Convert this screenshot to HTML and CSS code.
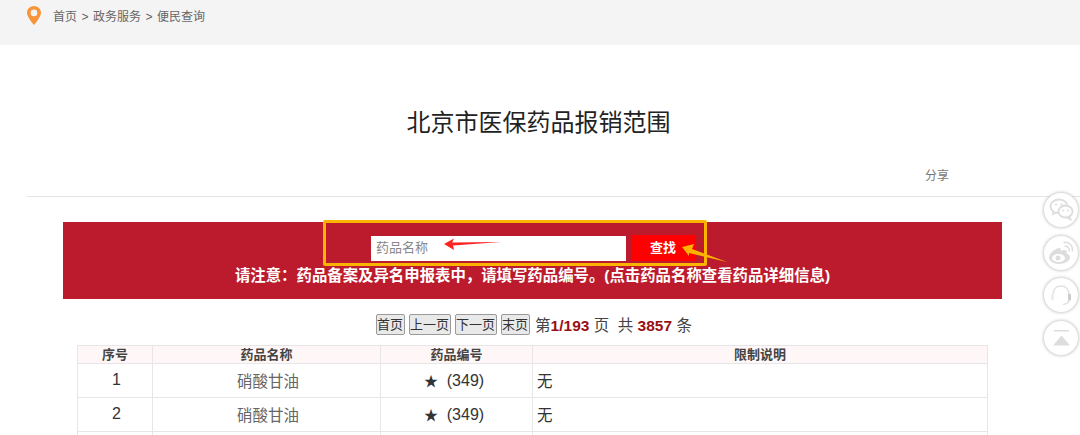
FILE: index.html
```html
<!DOCTYPE html>
<html lang="zh-CN">
<head>
<meta charset="utf-8">
<title>北京市医保药品报销范围</title>
<link rel="stylesheet" href="styles.css">
</head>
<body>
<header class="crumb">
  <svg class="pin" width="14" height="19" viewBox="0 0 14 19"><path fill="#f8953c" fill-rule="evenodd" d="M7 0C3 0 0 3 0 6.800c0 2.800 2.800 7.400 7 12.200 4.200-4.800 7-9.400 7-12.200C14 3 11 0 7 0zm0 3.600a3.300 3.300 0 1 1 0 6.600 3.300 3.300 0 0 1 0-6.600z"/></svg>
  <span>首页</span><span>&gt;</span><span>政务服务</span><span>&gt;</span><span>便民查询</span>
</header>
<main class="page">
  <h1 class="title">北京市医保药品报销范围</h1>
  <div class="share-row"><span class="share">分享</span></div>
  <section class="banner">
    <div class="search-row">
      <div class="input">药品名称</div>
      <div class="btn-search">查找</div>
    </div>
    <p class="notice">请注意：药品备案及异名申报表中，请填写药品编号。(点击药品名称查看药品详细信息)</p>
    <div class="highlight"></div>
    <svg class="arrows" width="420" height="60" viewBox="0 0 420 60">
      <path fill="#f22" d="M121 22l10-5.500-2 4 49-.5-48 3.500 1 4.500z"/>
      <path fill="#fdb400" d="M359 25l12-3-2 5 35 13-38-9 0 3z"/>
    </svg>
  </section>
  <nav class="pager">
    <button class="pg">首页</button>
    <button class="pg">上一页</button>
    <button class="pg">下一页</button>
    <button class="pg">末页</button>
    <span class="pg-info">第<b>1/193</b> 页&nbsp; 共 <b>3857</b> 条</span>
  </nav>
  <table class="drugs">
    <colgroup><col class="c1"><col class="c2"><col class="c3"><col></colgroup>
    <thead><tr><th>序号</th><th>药品名称</th><th>药品编号</th><th>限制说明</th></tr></thead>
    <tbody>
      <tr><td class="num">1</td><td class="name">硝酸甘油</td><td class="code"><span class="star">★</span>&nbsp;&nbsp;(349)</td><td class="lim">无</td></tr>
      <tr><td class="num">2</td><td class="name">硝酸甘油</td><td class="code"><span class="star">★</span>&nbsp;&nbsp;(349)</td><td class="lim">无</td></tr>
      <tr><td class="num"></td><td></td><td></td><td></td></tr>
    </tbody>
  </table>
</main>
<aside class="side">
  <div class="circle"><svg width="30" height="30" viewBox="0 0 30 30"><g fill="none" stroke="#ddd" stroke-width="1.800"><path d="M13 4.500c-4.700 0-8.500 3-8.500 6.800 0 2.200 1.200 4 3.100 5.200l-.6 2.500 2.800-1.400c1 .3 2 .4 3 .4"/><path d="M13 4.500c4 0 7.400 2.300 8.200 5.400"/><ellipse cx="19.500" cy="16.500" rx="7" ry="6"/><path d="M23.500 21.500l1 3-3-1.500"/></g><g fill="#ddd"><circle cx="10" cy="9.500" r="1.100"/><circle cx="15.500" cy="9.500" r="1.100"/><circle cx="17" cy="15.500" r="1"/><circle cx="22" cy="15.500" r="1"/></g></svg></div>
  <div class="circle"><svg width="30" height="30" viewBox="0 0 30 30"><path fill="#ddd" fill-rule="evenodd" d="M12.500 10C7.500 11.500 3 16 3 19.500 3 23 7.500 26 13 26c6 0 11-3 11-7 0-2-2-3-3.500-3.300.8-2 .3-3.700-2-3.700-1.200 0-2.500.5-3.500 1 .3-2-.6-3.500-2.500-3zM12.500 16c-3.600 0-6.500 1.800-6.500 4s2.900 4 6.500 4 6.500-1.800 6.500-4-2.900-4-6.500-4z"/><circle cx="12" cy="20" r="2.500" fill="#ddd"/><path fill="none" stroke="#ddd" stroke-width="1.500" d="M18.500 8.500c3-.7 5.500 1.800 4.700 5M17.500 4.500c5.500-1 10 3.500 8.700 9"/></svg></div>
  <div class="circle"><svg width="30" height="30" viewBox="0 0 30 30"><path fill="none" stroke="#e2e2e2" stroke-width="1.600" d="M7 15c0-6 3.500-9 8-9s8 3 8 9M23 20c0 2.500-2.500 4-6 4.500"/><rect x="5" y="13.500" width="3" height="7" rx="1.500" fill="#eee"/><rect x="22" y="13.500" width="3" height="7" rx="1.500" fill="#ccc"/></svg></div>
  <div class="circle"><svg width="30" height="30" viewBox="0 0 30 30"><path fill="#ddd" d="M8 7h15v1.500H8zM15.500 12.500l8.500 10H7z"/></svg></div>
</aside>
</body>
</html>
```
FILE: styles.css
```css
* { box-sizing: border-box; }
html, body { margin: 0; padding: 0; height: 435px; overflow: hidden; background: #fff; }
body { font-family: "Liberation Sans", "Noto Sans CJK SC", sans-serif; color: #333; }

.crumb { height: 45px; background: #f4f4f4; padding: 6px 0 0 27px; display: flex; align-items: flex-start; gap: 4.500px; font-size: 12px; line-height: 22px; color: #666; }
.pin { flex: none; margin-right: 7.500px; }

.page { margin: 0 78px 0 27px; }
.title { margin: 0; padding: 61px 0 0 48px; height: 116px; font-size: 24px; line-height: 34px; font-weight: 400; text-align: center; color: #222; }
.share-row { height: 36px; margin-right: -78px; border-bottom: 1px solid #e4e4e4; display: flex; justify-content: flex-end; padding: 7px 131px 0 0; }
.share { font-size: 12px; line-height: 16px; color: #777; }

.banner { position: relative; margin: 25px 0 0 36px; width: 939px; height: 77px; background: #bc1b2d; padding-top: 13px; }
.search-row { display: flex; margin-left: 308px; height: 26px; align-items: flex-start; }
.input { width: 255px; height: 25px; margin-top: 1px; background: #fff; color: #888; font-size: 13px; line-height: 24px; padding-left: 5px; }
.btn-search { width: 64px; height: 26px; margin-left: 5px; background: #f00; color: #fff; font-size: 13px; line-height: 26px; font-weight: 700; text-align: center; }
.notice { margin: 5px 0 0; font-size: 15.400px; line-height: 20px; font-weight: 700; color: #fff; text-align: center; white-space: nowrap; }
.highlight { position: absolute; left: 260px; top: -2px; width: 384px; height: 46px; border: 3px solid #fdb400; border-radius: 2px; }
.arrows { position: absolute; left: 260px; top: 0; }

.pager { margin-top: 12px; height: 26px; display: flex; align-items: center; gap: 4px; padding-left: 348.500px; }
.pg { height: 21px; padding: 0 0.500px; margin: 0; font-family: inherit; font-size: 13px; line-height: 17px; color: #333; background: #e9e9e9; border: 1px solid #9a9a9a; border-radius: 2px; }
.pg-info { font-size: 15.500px; color: #444; white-space: nowrap; margin-left: 1.500px; }
.pg-info b { color: #9a0f14; }

.drugs { margin: 8px 0 0 50px; width: 911px; border-collapse: collapse; table-layout: fixed; font-size: 14px; color: #333; }
.c1 { width: 75px; }
.c2 { width: 228px; }
.c3 { width: 152px; }
.drugs th, .drugs td { border: 1px solid #e6e6e6; padding: 0; }
.drugs th { height: 18px; background: #fff7f7; font-size: 13px; line-height: 17px; font-weight: 700; color: #444; }
.drugs td { height: 34px; text-align: center; }
.drugs td.num { font-size: 16px; padding: 0 0 1px 3px; }
.drugs td.name { font-size: 15.500px; color: #666; padding: 0 0 2px 3px; }
.drugs td.code { font-size: 16px; padding: 0 5px 1px 0; }
.star { font-size: 14px; }
.drugs td.lim { text-align: left; padding: 0 0 2px 4px; font-size: 15.500px; }

.side { position: fixed; right: 2px; top: 193px; width: 34px; display: flex; flex-direction: column; gap: 8.500px; align-items: center; }
.circle { width: 34px; height: 34px; border-radius: 50%; background: #fff; box-shadow: 0 0 3px 1px #ccc; display: flex; align-items: center; justify-content: center; }
.circle svg { flex: none; }
```
